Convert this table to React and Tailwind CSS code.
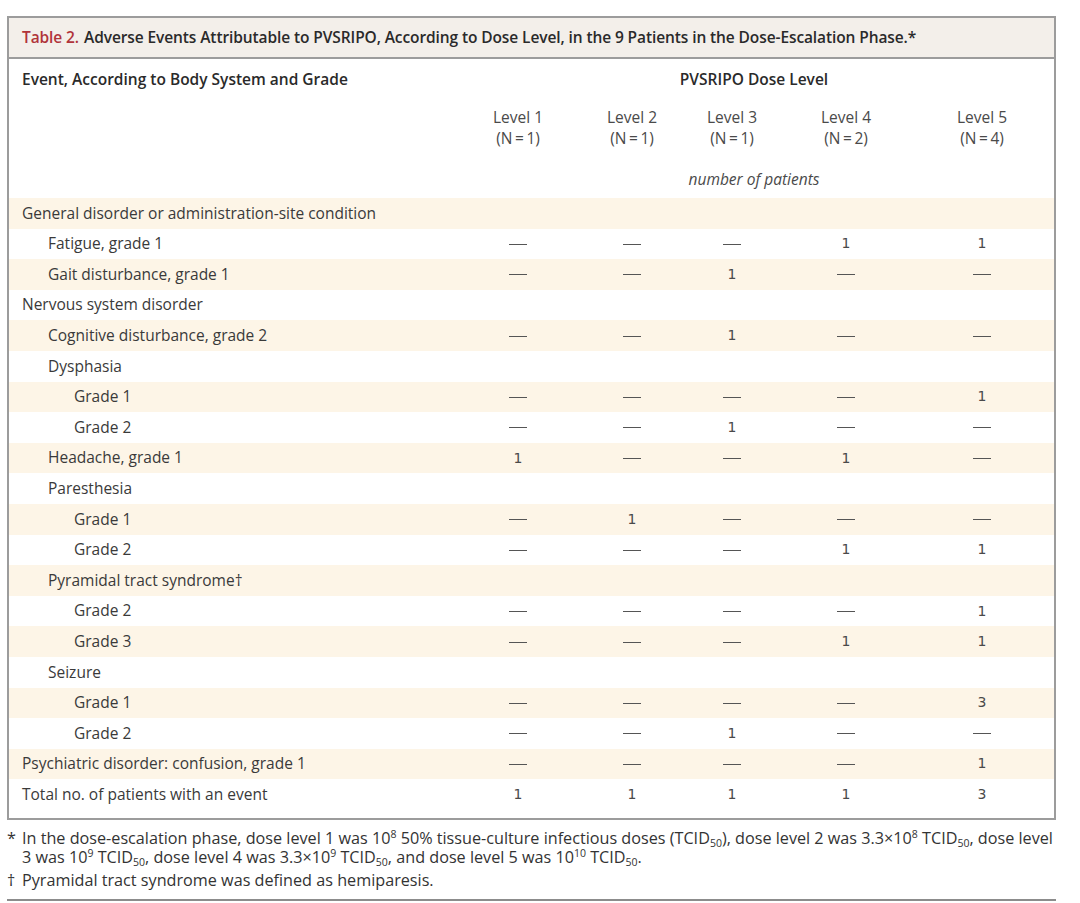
import React from "react";

const rows = [
  { label: "General disorder or administration-site condition", level: 0, values: null },
  { label: "Fatigue, grade 1", level: 1, values: ["—", "—", "—", "1", "1"] },
  { label: "Gait disturbance, grade 1", level: 1, values: ["—", "—", "1", "—", "—"] },
  { label: "Nervous system disorder", level: 0, values: null },
  { label: "Cognitive disturbance, grade 2", level: 1, values: ["—", "—", "1", "—", "—"] },
  { label: "Dysphasia", level: 1, values: null },
  { label: "Grade 1", level: 2, values: ["—", "—", "—", "—", "1"] },
  { label: "Grade 2", level: 2, values: ["—", "—", "1", "—", "—"] },
  { label: "Headache, grade 1", level: 1, values: ["1", "—", "—", "1", "—"] },
  { label: "Paresthesia", level: 1, values: null },
  { label: "Grade 1", level: 2, values: ["—", "1", "—", "—", "—"] },
  { label: "Grade 2", level: 2, values: ["—", "—", "—", "1", "1"] },
  { label: "Pyramidal tract syndrome†", level: 1, values: null },
  { label: "Grade 2", level: 2, values: ["—", "—", "—", "—", "1"] },
  { label: "Grade 3", level: 2, values: ["—", "—", "—", "1", "1"] },
  { label: "Seizure", level: 1, values: null },
  { label: "Grade 1", level: 2, values: ["—", "—", "—", "—", "3"] },
  { label: "Grade 2", level: 2, values: ["—", "—", "1", "—", "—"] },
  { label: "Psychiatric disorder: confusion, grade 1", level: 0, values: ["—", "—", "—", "—", "1"] },
  { label: "Total no. of patients with an event", level: 0, values: ["1", "1", "1", "1", "3"] },
];

const levels = [
  ["Level 1", "1"],
  ["Level 2", "1"],
  ["Level 3", "1"],
  ["Level 4", "2"],
  ["Level 5", "4"],
];

const indent = ["pl-[13px]", "pl-[39px]", "pl-[65px]"];
const grid = "grid grid-cols-[452px_114px_114px_86px_142px_130px_1fr]";

function Sub({ children }) {
  return <span className="text-[10.5px] leading-none align-[-3px]">{children}</span>;
}

function Sup({ children }) {
  return <span className="text-[10.5px] leading-none align-[6px]">{children}</span>;
}

export default function App() {
  return (
    <div className="bg-white w-[1080px] h-[903px] pt-[16px] pl-[7px] pr-[24px] text-[#3a3a3a] font-['Open_Sans',sans-serif]">
      <div className="border-2 border-[#9c9c9c]">
        <div className="bg-[#f3efea] border-b-2 border-[#9c9c9c] h-[41px] flex items-center pl-[13px] text-[15.5px] font-semibold text-[#2a2a2a] tracking-[-0.1px]">
          <span className="text-[#b0343a]">Table 2.</span>
          <span className="ml-[5px]">
            Adverse Events Attributable to PVSRIPO, According to Dose Level, in the 9 Patients in the Dose-Escalation Phase.*
          </span>
        </div>

        <div className={`${grid} pt-[8px] pb-[6px] text-[15.5px] leading-[21px]`}>
          <div className="pl-[13px] font-semibold text-[#2a2a2a] h-[24px] leading-[24px]">
            Event, According to Body System and Grade
          </div>
          <div className="col-span-5 text-center font-semibold text-[#2a2a2a] leading-[24px]">PVSRIPO Dose Level</div>
          <div />
          <div className="h-[76px]" />
          {levels.map(([a, n]) => (
            <div key={a} className="text-center pt-[16px] text-[#4a4a4a]">
              <div>{a}</div>
              <div>(N{"\u2009"}={"\u2009"}{n})</div>
            </div>
          ))}
          <div />
          <div />
          <div className="col-span-5 text-center italic text-[#4a4a4a] h-[25px] leading-[25px]">number of patients</div>
          <div />
        </div>

        <div className="pb-[8px]">
          {rows.map((r, i) => (
            <div
              key={i}
              className={`${grid} h-[30.6px] items-center text-[15.5px] ${i % 2 === 0 ? "bg-[#fdf5e7]" : "bg-white"}`}
            >
              <div className={indent[r.level]}>{r.label}</div>
              {r.values
                ? r.values.map((v, j) => (
                    <div key={j} className="text-center text-[#4a4a4a] font-['DejaVu_Sans',sans-serif] text-[14px]">
                      {v === "—" ? <span className="inline-block w-[18px] h-[1px] bg-[#555] align-middle" /> : v}
                    </div>
                  ))
                : null}
            </div>
          ))}
        </div>
      </div>

      <div className="pt-[9px] text-[16.2px] leading-[19.5px] text-[#333]">
        <p className="pl-[15px] -indent-[15px]">
          <span className="inline-block w-[15px] indent-0">*</span>In the dose-escalation phase, dose level 1 was 10<Sup>8</Sup> 50% tissue-culture infectious doses (TCID<Sub>50</Sub>), dose level 2 was 3.3×10<Sup>8</Sup> TCID<Sub>50</Sub>, dose level 3 was 10<Sup>9</Sup> TCID<Sub>50</Sub>, dose level 4 was 3.3×10<Sup>9</Sup> TCID<Sub>50</Sub>, and dose level 5 was 10<Sup>10</Sup> TCID<Sub>50</Sub>.
        </p>
        <p className="pl-[15px] -indent-[15px] mt-[3px]">
          <span className="inline-block w-[15px] indent-0">†</span>Pyramidal tract syndrome was defined as hemiparesis.
        </p>
        <div className="mt-[9px] border-t-2 border-[#8c8c8c]" />
      </div>
    </div>
  );
}
